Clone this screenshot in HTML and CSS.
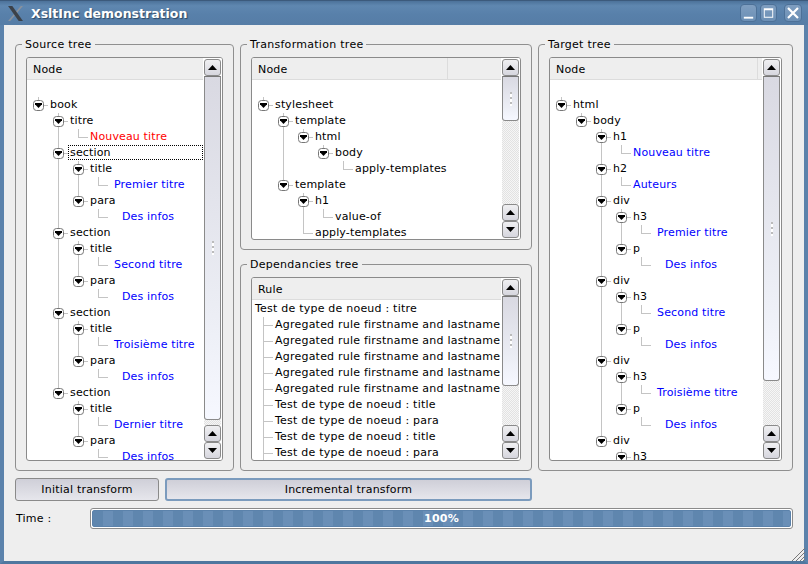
FILE: index.html
```html
<!DOCTYPE html>
<html lang="en">
<head>
<meta charset="utf-8">
<title>XsltInc demonstration</title>
<link rel="stylesheet" href="styles.css">
</head>
<body>
<svg class="defs" aria-hidden="true">
  <symbol id="ex" viewBox="0 0 11 11">
    <rect x=".5" y=".5" width="10" height="10" rx="3" fill="#fff" stroke="#777"/>
    <path d="M2 3h7v1.2L5.5 8 2 4.2z" fill="#000"/>
  </symbol>
  <symbol id="up" viewBox="0 0 9 5"><path d="M4.5 0L9 5H0z" fill="#000"/></symbol>
  <symbol id="down" viewBox="0 0 9 5"><path d="M0 0h9L4.5 5z" fill="#000"/></symbol>
</svg>
<div class="window">
  <header class="titlebar">
    <svg class="appicon" viewBox="0 0 16 16"><path d="M13 1l2 0-12 14-2 0z" fill="#8b929c"/><path d="M1 1l4 0 10 14-4 0z" fill="#3c4148"/></svg>
    <h1 class="title">XsltInc demonstration</h1>
    <div class="winbtns">
      <span class="winbtn"><svg viewBox="0 0 16 16"><path d="M3 12h10v2H3z" fill="#fff"/></svg></span>
      <span class="winbtn"><svg viewBox="0 0 16 16"><path d="M3 3h10v10H3z M4 5v7h8V5z" fill="#fff" fill-rule="evenodd"/></svg></span>
      <span class="winbtn close"><svg viewBox="0 0 16 16"><path d="M3 3l10 10M13 3L3 13" stroke="#fff" stroke-width="2.2" fill="none"/></svg></span>
    </div>
  </header>
  <main class="content">
    <div class="panels">
      <section class="group">
        <div class="group-title">Source tree</div>
        <div class="list">
          <div class="list-main">
            <div class="head"><span class="head-cell">Node</span></div>
            <div class="tree src">
              <div class="row"><i class="c e"><svg class="ex"><use href="#ex"/></svg></i><span>book</span></div>
              <div class="row"><i class="c"></i><i class="c e ev"><svg class="ex"><use href="#ex"/></svg></i><span>titre</span></div>
              <div class="row"><i class="c"></i><i class="c v"></i><i class="c l"></i><span class="red">Nouveau titre</span></div>
              <div class="row"><i class="c"></i><i class="c e ev"><svg class="ex"><use href="#ex"/></svg></i><span class="selected">section</span></div>
              <div class="row"><i class="c"></i><i class="c v"></i><i class="c e ev"><svg class="ex"><use href="#ex"/></svg></i><span>title</span></div>
              <div class="row"><i class="c"></i><i class="c v"></i><i class="c v"></i><i class="c l"></i><span class="blue s1">Premier titre</span></div>
              <div class="row"><i class="c"></i><i class="c v"></i><i class="c e"><svg class="ex"><use href="#ex"/></svg></i><span>para</span></div>
              <div class="row"><i class="c"></i><i class="c v"></i><i class="c"></i><i class="c l"></i><span class="blue s3">Des infos</span></div>
              <div class="row"><i class="c"></i><i class="c e ev"><svg class="ex"><use href="#ex"/></svg></i><span>section</span></div>
              <div class="row"><i class="c"></i><i class="c v"></i><i class="c e ev"><svg class="ex"><use href="#ex"/></svg></i><span>title</span></div>
              <div class="row"><i class="c"></i><i class="c v"></i><i class="c v"></i><i class="c l"></i><span class="blue s1">Second titre</span></div>
              <div class="row"><i class="c"></i><i class="c v"></i><i class="c e"><svg class="ex"><use href="#ex"/></svg></i><span>para</span></div>
              <div class="row"><i class="c"></i><i class="c v"></i><i class="c"></i><i class="c l"></i><span class="blue s3">Des infos</span></div>
              <div class="row"><i class="c"></i><i class="c e ev"><svg class="ex"><use href="#ex"/></svg></i><span>section</span></div>
              <div class="row"><i class="c"></i><i class="c v"></i><i class="c e ev"><svg class="ex"><use href="#ex"/></svg></i><span>title</span></div>
              <div class="row"><i class="c"></i><i class="c v"></i><i class="c v"></i><i class="c l"></i><span class="blue s1">Troisième titre</span></div>
              <div class="row"><i class="c"></i><i class="c v"></i><i class="c e"><svg class="ex"><use href="#ex"/></svg></i><span>para</span></div>
              <div class="row"><i class="c"></i><i class="c v"></i><i class="c"></i><i class="c l"></i><span class="blue s3">Des infos</span></div>
              <div class="row"><i class="c"></i><i class="c e"><svg class="ex"><use href="#ex"/></svg></i><span>section</span></div>
              <div class="row"><i class="c"></i><i class="c"></i><i class="c e ev"><svg class="ex"><use href="#ex"/></svg></i><span>title</span></div>
              <div class="row"><i class="c"></i><i class="c"></i><i class="c v"></i><i class="c l"></i><span class="blue s1">Dernier titre</span></div>
              <div class="row"><i class="c"></i><i class="c"></i><i class="c e"><svg class="ex"><use href="#ex"/></svg></i><span>para</span></div>
              <div class="row"><i class="c"></i><i class="c"></i><i class="c"></i><i class="c l"></i><span class="blue s3">Des infos</span></div>
            </div>
          </div>
          <div class="scrollbar">
            <span class="sb-btn"><svg class="arrow"><use href="#up"/></svg></span>
            <span class="handle h-src"><b class="grip"></b></span>
            <span class="trough"></span>
            <span class="sb-btn"><svg class="arrow"><use href="#up"/></svg></span>
            <span class="sb-btn"><svg class="arrow"><use href="#down"/></svg></span>
          </div>
        </div>
      </section>

      <div class="middle">
        <section class="group">
          <div class="group-title">Transformation tree</div>
          <div class="list">
            <div class="list-main">
              <div class="head"><span class="head-cell w-196">Node</span></div>
              <div class="tree src">
                <div class="row"><i class="c e"><svg class="ex"><use href="#ex"/></svg></i><span>stylesheet</span></div>
                <div class="row"><i class="c"></i><i class="c e ev"><svg class="ex"><use href="#ex"/></svg></i><span>template</span></div>
                <div class="row"><i class="c"></i><i class="c v"></i><i class="c e"><svg class="ex"><use href="#ex"/></svg></i><span>html</span></div>
                <div class="row"><i class="c"></i><i class="c v"></i><i class="c"></i><i class="c e"><svg class="ex"><use href="#ex"/></svg></i><span>body</span></div>
                <div class="row"><i class="c"></i><i class="c v"></i><i class="c"></i><i class="c"></i><i class="c l"></i><span>apply-templates</span></div>
                <div class="row"><i class="c"></i><i class="c e"><svg class="ex"><use href="#ex"/></svg></i><span>template</span></div>
                <div class="row"><i class="c"></i><i class="c"></i><i class="c e ev"><svg class="ex"><use href="#ex"/></svg></i><span>h1</span></div>
                <div class="row"><i class="c"></i><i class="c"></i><i class="c v"></i><i class="c l"></i><span>value-of</span></div>
                <div class="row"><i class="c"></i><i class="c"></i><i class="c l"></i><span>apply-templates</span></div>
              </div>
            </div>
            <div class="scrollbar">
              <span class="sb-btn"><svg class="arrow"><use href="#up"/></svg></span>
              <span class="handle h-tr"><b class="grip"></b></span>
              <span class="trough"></span>
              <span class="sb-btn"><svg class="arrow"><use href="#up"/></svg></span>
              <span class="sb-btn"><svg class="arrow"><use href="#down"/></svg></span>
            </div>
          </div>
        </section>
        <section class="group">
          <div class="group-title">Dependancies tree</div>
          <div class="list">
            <div class="list-main">
              <div class="head"><span class="head-cell">Rule</span></div>
              <div class="tree flat">
                <div class="row root"><span>Test de type de noeud : titre</span></div>
                <div class="row"><i class="c t"></i><span>Agregated rule firstname and lastname</span></div>
                <div class="row"><i class="c t"></i><span>Agregated rule firstname and lastname</span></div>
                <div class="row"><i class="c t"></i><span>Agregated rule firstname and lastname</span></div>
                <div class="row"><i class="c t"></i><span>Agregated rule firstname and lastname</span></div>
                <div class="row"><i class="c t"></i><span>Agregated rule firstname and lastname</span></div>
                <div class="row"><i class="c t"></i><span>Test de type de noeud : title</span></div>
                <div class="row"><i class="c t"></i><span>Test de type de noeud : para</span></div>
                <div class="row"><i class="c t"></i><span>Test de type de noeud : title</span></div>
                <div class="row"><i class="c t"></i><span>Test de type de noeud : para</span></div>
              </div>
            </div>
            <div class="scrollbar">
              <span class="sb-btn"><svg class="arrow"><use href="#up"/></svg></span>
              <span class="handle h-dep"><b class="grip"></b></span>
              <span class="trough"></span>
              <span class="sb-btn"><svg class="arrow"><use href="#up"/></svg></span>
              <span class="sb-btn"><svg class="arrow"><use href="#down"/></svg></span>
            </div>
          </div>
        </section>
      </div>

      <section class="group">
        <div class="group-title">Target tree</div>
        <div class="list">
          <div class="list-main">
            <div class="head"><span class="head-cell w-208">Node</span></div>
            <div class="tree src">
              <div class="row"><i class="c e"><svg class="ex"><use href="#ex"/></svg></i><span>html</span></div>
              <div class="row"><i class="c"></i><i class="c e"><svg class="ex"><use href="#ex"/></svg></i><span>body</span></div>
              <div class="row"><i class="c"></i><i class="c"></i><i class="c e ev"><svg class="ex"><use href="#ex"/></svg></i><span>h1</span></div>
              <div class="row"><i class="c"></i><i class="c"></i><i class="c v"></i><i class="c l"></i><span class="blue">Nouveau titre</span></div>
              <div class="row"><i class="c"></i><i class="c"></i><i class="c e ev"><svg class="ex"><use href="#ex"/></svg></i><span>h2</span></div>
              <div class="row"><i class="c"></i><i class="c"></i><i class="c v"></i><i class="c l"></i><span class="blue">Auteurs</span></div>
              <div class="row"><i class="c"></i><i class="c"></i><i class="c e ev"><svg class="ex"><use href="#ex"/></svg></i><span>div</span></div>
              <div class="row"><i class="c"></i><i class="c"></i><i class="c v"></i><i class="c e ev"><svg class="ex"><use href="#ex"/></svg></i><span>h3</span></div>
              <div class="row"><i class="c"></i><i class="c"></i><i class="c v"></i><i class="c v"></i><i class="c l"></i><span class="blue s1">Premier titre</span></div>
              <div class="row"><i class="c"></i><i class="c"></i><i class="c v"></i><i class="c e"><svg class="ex"><use href="#ex"/></svg></i><span>p</span></div>
              <div class="row"><i class="c"></i><i class="c"></i><i class="c v"></i><i class="c"></i><i class="c l"></i><span class="blue s3">Des infos</span></div>
              <div class="row"><i class="c"></i><i class="c"></i><i class="c e ev"><svg class="ex"><use href="#ex"/></svg></i><span>div</span></div>
              <div class="row"><i class="c"></i><i class="c"></i><i class="c v"></i><i class="c e ev"><svg class="ex"><use href="#ex"/></svg></i><span>h3</span></div>
              <div class="row"><i class="c"></i><i class="c"></i><i class="c v"></i><i class="c v"></i><i class="c l"></i><span class="blue s1">Second titre</span></div>
              <div class="row"><i class="c"></i><i class="c"></i><i class="c v"></i><i class="c e"><svg class="ex"><use href="#ex"/></svg></i><span>p</span></div>
              <div class="row"><i class="c"></i><i class="c"></i><i class="c v"></i><i class="c"></i><i class="c l"></i><span class="blue s3">Des infos</span></div>
              <div class="row"><i class="c"></i><i class="c"></i><i class="c e ev"><svg class="ex"><use href="#ex"/></svg></i><span>div</span></div>
              <div class="row"><i class="c"></i><i class="c"></i><i class="c v"></i><i class="c e ev"><svg class="ex"><use href="#ex"/></svg></i><span>h3</span></div>
              <div class="row"><i class="c"></i><i class="c"></i><i class="c v"></i><i class="c v"></i><i class="c l"></i><span class="blue s1">Troisième titre</span></div>
              <div class="row"><i class="c"></i><i class="c"></i><i class="c v"></i><i class="c e"><svg class="ex"><use href="#ex"/></svg></i><span>p</span></div>
              <div class="row"><i class="c"></i><i class="c"></i><i class="c v"></i><i class="c"></i><i class="c l"></i><span class="blue s3">Des infos</span></div>
              <div class="row"><i class="c"></i><i class="c"></i><i class="c e"><svg class="ex"><use href="#ex"/></svg></i><span>div</span></div>
              <div class="row"><i class="c"></i><i class="c"></i><i class="c"></i><i class="c e"><svg class="ex"><use href="#ex"/></svg></i><span>h3</span></div>
            </div>
          </div>
          <div class="scrollbar">
            <span class="sb-btn"><svg class="arrow"><use href="#up"/></svg></span>
            <span class="handle h-tg"><b class="grip"></b></span>
            <span class="trough"></span>
            <span class="sb-btn"><svg class="arrow"><use href="#up"/></svg></span>
            <span class="sb-btn"><svg class="arrow"><use href="#down"/></svg></span>
          </div>
        </div>
      </section>
    </div>

    <div class="actions">
      <button class="btn initial" type="button">Initial transform</button>
      <button class="btn incremental" type="button">Incremental transform</button>
    </div>
    <div class="timeline">
      <span class="time-label">Time :</span>
      <div class="progress"><div class="progress-bar">100%</div></div>
    </div>
  </main>
  <div class="bottom-row">
    <svg class="sizegrip" viewBox="0 0 14 14"><path d="M14 1L1 14M14 5L5 14M14 9L9 14M14 12L12 14" stroke="#777" stroke-width="1" fill="none"/></svg>
  </div>
</div>
</body>
</html>
```

FILE: styles.css
```css
* { box-sizing: border-box; }
html, body { margin: 0; padding: 0; }
body {
  width: 808px;
  height: 564px;
  overflow: hidden;
  font-family: "DejaVu Sans", sans-serif;
  font-size: 11px;
  letter-spacing: .2px;
  color: #000;
  background: #eee;
}
.defs { width: 0; height: 0; display: block; }
.window {
  width: 808px;
  height: 564px;
  display: flex;
  flex-direction: column;
  background: #eeeeee;
  border-left: 4px solid #5b82ab;
  border-right: 4px solid #5b82ab;
  border-bottom: 3px solid #4f779f;
}
.titlebar {
  height: 25px;
  margin: 0 -4px;
  flex: none;
  display: flex;
  align-items: center;
  padding: 0 6px 0 7px;
  background: linear-gradient(#4c729a 0, #5f87b0 20%, #5880aa 55%, #567da6 100%);
  border-top: 1px solid #3c5a7c;
}
.appicon { width: 17px; height: 17px; flex: none; }
.title {
  margin: 0 0 0 7px;
  font-size: 12.5px;
  font-weight: bold;
  letter-spacing: 0;
  color: #fff;
  text-shadow: 1px 1px 1px #2c4866;
  flex: 1;
}
.winbtns { display: flex; gap: 3px; }
.winbtn {
  width: 17px;
  height: 18px;
  border: 1px solid #4d7198;
  border-radius: 4px;
  background: linear-gradient(#7f9ec0, #6b8fb5);
  display: flex;
}
.winbtn.close { margin-left: 4px; width: 18px; }
.winbtn svg { width: 15px; height: 16px; }
.winbtn.close svg { width: 16px; }

.content {
  flex: 1;
  min-height: 0;
  display: flex;
  flex-direction: column;
  padding: 19px 11px 0 11px;
}
.panels {
  display: grid;
  grid-template-columns: 219px 292px 255px;
  column-gap: 6px;
  height: 427px;
  flex: none;
}
.middle {
  display: flex;
  flex-direction: column;
  gap: 14px;
  min-height: 0;
}
.middle .group:first-child { height: 206px; flex: none; }
.middle .group:last-child { height: 207px; flex: none; }
.group {
  border: 1px solid #8f8f8f;
  border-radius: 4px;
  padding: 0 10px 9px 10px;
  display: flex;
  flex-direction: column;
  min-height: 0;
  min-width: 0;
}
.group-title {
  align-self: flex-start;
  margin: -7px 0 5px -4px;
  padding: 0 3px;
  height: 14px;
  line-height: 14px;
  letter-spacing: .28px;
  background: #eee;
  flex: none;
}
.list {
  flex: 1;
  min-height: 0;
  display: flex;
  border: 1px solid #8a8a8a;
  border-radius: 3px;
  background: #fff;
  overflow: hidden;
}
.list-main {
  flex: 1;
  min-width: 0;
  display: flex;
  flex-direction: column;
}
.head {
  height: 22px;
  flex: none;
  background: #eeeeee;
  border-bottom: 1px solid #dcdcdc;
  display: flex;
}
.head-cell {
  padding-left: 6px;
  line-height: 23px;
}
.w-196 { width: 196px; border-right: 1px solid #dcdcdc; }
.w-208 { width: 208px; border-right: 1px solid #dcdcdc; }
.tree { flex: 1; min-height: 0; overflow: hidden; white-space: nowrap; }
.tree.src { padding: 17px 0 0 1px; letter-spacing: .15px; }
.tree.flat { padding: 1px 0 0 1px; letter-spacing: .22px; }
.row { display: flex; height: 16px; line-height: 16px; }
.root { padding-left: 2px; }
.c {
  width: 20px;
  height: 16px;
  flex: none;
  display: flex;
  align-items: center;
  justify-content: center;
  background-repeat: no-repeat;
}
.c + span { margin-left: 2px; }
.v { background-image: linear-gradient(#c4c4c4, #c4c4c4); background-size: 1px 16px; background-position: 10px 0; }
.l {
  background-image: linear-gradient(#c4c4c4, #c4c4c4), linear-gradient(#c4c4c4, #c4c4c4);
  background-size: 1px 8px, 10px 1px;
  background-position: 10px 0, 10px 8px;
}
.t {
  background-image: linear-gradient(#c4c4c4, #c4c4c4), linear-gradient(#c4c4c4, #c4c4c4);
  background-size: 1px 16px, 10px 1px;
  background-position: 10px 0, 10px 8px;
}
.e {
  background-image: linear-gradient(#c4c4c4, #c4c4c4), linear-gradient(#c4c4c4, #c4c4c4);
  background-size: 1px 8px, 10px 1px;
  background-position: 10px 0, 10px 8px;
}
.ev {
  background-size: 1px 16px, 10px 1px;
}
.ex { width: 11px; height: 11px; display: block; }
.red { color: #ff0000; }
.blue { color: #0000ff; }
.s1 { padding-left: 4px; }
.s3 { padding-left: 12px; }
.selected {
  flex: none;
  width: 135px;
  height: 15px;
  line-height: 13px;
  margin-left: 0 !important;
  padding-left: 1px;
  border: 1px dotted #000;
}

.scrollbar {
  width: 19px;
  flex: none;
  display: flex;
  flex-direction: column;
  padding: 1px 1px 1px 1px;
  background: #fff;
}
.sb-btn {
  height: 17px;
  flex: none;
  display: flex;
  align-items: center;
  justify-content: center;
  border: 1px solid #8a8a8a;
  border-radius: 3px;
  background: linear-gradient(#f0f0f2, #d6d6de);
}
.arrow { width: 9px; height: 5px; display: block; }
.handle {
  flex: none;
  display: flex;
  align-items: center;
  justify-content: center;
  border: 1px solid #8a8a8a;
  border-top-color: #777;
  border-radius: 0 0 3px 3px;
  background: linear-gradient(#d9d9e2, #eceef5 70%, #f6f8ff);
}
.h-src { height: 344px; }
.h-tr { height: 45px; }
.h-dep { height: 90px; }
.h-tg { height: 305px; }
.grip {
  width: 2px;
  height: 14px;
  background: repeating-linear-gradient(#bbb 0, #bbb 2px, #fff 2px, #fff 5px);
}
.trough {
  flex: 1;
  min-height: 0;
  background: repeating-conic-gradient(#e2e2e2 0 25%, #f6f6f6 0 50%) 0 0 / 2px 2px;
}

.actions {
  display: flex;
  gap: 6px;
  margin-top: 7px;
  flex: none;
}
.btn {
  height: 23px;
  font: inherit;
  letter-spacing: .2px;
  color: #000;
  border: 1px solid #8a8a8a;
  border-radius: 3px;
  padding: 0;
  background: linear-gradient(#cfcfd8, #e6e6ec);
}
.initial { width: 144px; }
.incremental {
  width: 367px;
  border: 2px solid #7b9bbd;
  outline: none;
}
.timeline {
  display: flex;
  align-items: center;
  margin-top: 7px;
  flex: none;
}
.time-label { width: 75px; padding-left: 1px; }
.progress {
  width: 703px;
  height: 21px;
  border: 1px solid #8a8a8a;
  border-radius: 3px;
  padding: 1px;
  background: #fff;
}
.progress-bar {
  height: 100%;
  border-radius: 2px;
  border: 1px solid #5b82ab;
  color: #fff;
  font-weight: bold;
  text-align: center;
  line-height: 15px;
  background: repeating-linear-gradient(90deg, #5f86ae 0, #5f86ae 10px, #6a8fb7 10px, #6a8fb7 20px);
}
.bottom-row {
  flex: 1;
  display: flex;
  justify-content: flex-end;
  align-items: flex-end;
  margin-right: -1px;
}
.sizegrip { width: 14px; height: 14px; display: block; }
```
